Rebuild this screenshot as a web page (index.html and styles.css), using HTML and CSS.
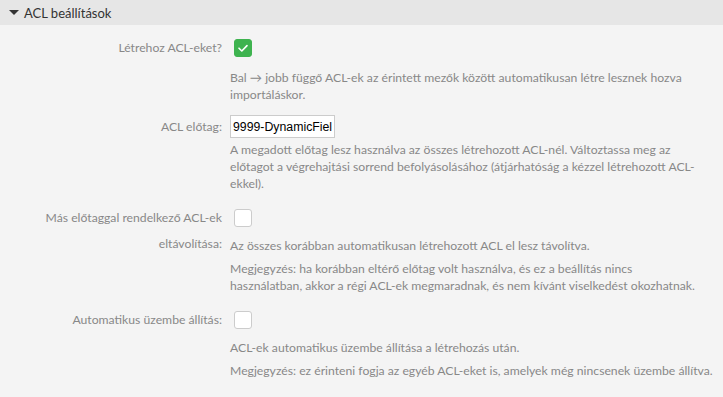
FILE: index.html
```html
<html lang="en">
<head>
  <meta charset="UTF-8" />
  <title>ACL beállítások</title>
  <link rel="stylesheet" href="styles.css">
</head>
<body>
  <div class="widget">
    <div class="widget-header">
      <span class="toggle"></span>
      <h2>ACL beállítások</h2>
    </div>

    <div class="widget-content">
      <div class="field-row first">
        <label class="field-label">Létrehoz ACL-eket?</label>
        <div class="field">
          <span class="checkbox checked">
            <svg viewBox="0 0 18 18" width="18" height="18"><path d="M5 9.2 L7.8 12 L13 6.6" fill="none" stroke="#fff" stroke-width="1.6" stroke-linecap="round" stroke-linejoin="round"/></svg>
          </span>
          <p class="desc">Bal → jobb függő ACL-ek az érintett mezők között automatikusan létre lesznek hozva importáláskor.</p>
        </div>
      </div>

      <div class="field-row text-row">
        <label class="field-label">ACL előtag:</label>
        <div class="field">
          <input class="text-input" type="text" value="9999-DynamicField" />
          <p class="desc">A megadott előtag lesz használva az összes létrehozott ACL-nél. Változtassa meg az előtagot a végrehajtási sorrend befolyásolásához (átjárhatóság a kézzel létrehozott ACL-ekkel).</p>
        </div>
      </div>

      <div class="field-row">
        <label class="field-label wrap">Más előtaggal rendelkező ACL-ek eltávolítása:</label>
        <div class="field">
          <span class="checkbox"></span>
          <p class="desc">Az összes korábban automatikusan létrehozott ACL el lesz távolítva.</p>
          <p class="desc note">Megjegyzés: ha korábban eltérő előtag volt használva, és ez a beállítás nincs<br>használatban, akkor a régi ACL-ek megmaradnak, és nem kívánt viselkedést okozhatnak.</p>
        </div>
      </div>

      <div class="field-row">
        <label class="field-label">Automatikus üzembe állítás:</label>
        <div class="field">
          <span class="checkbox"></span>
          <p class="desc">ACL-ek automatikus üzembe állítása a létrehozás után.</p>
          <p class="desc note">Megjegyzés: ez érinteni fogja az egyéb ACL-eket is, amelyek még nincsenek üzembe állítva.</p>
        </div>
      </div>
    </div>
  </div>
</body>
</html>
```

FILE: styles.css
```css
* {
  box-sizing: border-box;
}

body {
  margin: 0;
  padding: 0;
  background-color: #f4f4f4;
  font-family: Lato, "Open Sans", sans-serif;
  font-size: 12.2px;
  color: #888;
  overflow: hidden;
}

.widget-header {
  display: flex;
  align-items: center;
  height: 25px;
  padding-left: 9px;
  background-color: #e6e6e6;
}

.toggle {
  width: 0;
  height: 0;
  border-left: 5px solid transparent;
  border-right: 5px solid transparent;
  border-top: 5px solid #333;
  margin-right: 5px;
}

.widget-header h2 {
  margin: 0;
  font-size: 13px;
  font-weight: normal;
  color: #333;
}

.widget-content {
  padding-top: 9px;
}

.field-row {
  display: grid;
  grid-template-columns: 222px 1fr;
  column-gap: 8px;
  margin-bottom: 12px;
}

.field-label {
  text-align: right;
  line-height: 18px;
  padding-top: 5px;
}

.text-row .field-label {
  padding-top: 3px;
}

.field-label.wrap {
  line-height: 26px;
  padding-top: 1px;
}

.field {
  padding-right: 6px;
}

.checkbox {
  display: block;
  width: 18px;
  height: 18px;
  margin: 5px 0 0 4px;
  border: 1px solid #ccc;
  border-radius: 3px;
  background: #fff;
}

.checkbox.checked {
  border-color: #3eb34f;
  background: #3eb34f;
}

.checkbox svg {
  display: block;
  margin: -1px;
}

.text-input {
  display: block;
  width: 105px;
  height: 23px;
  padding: 0 2px;
  border: 1px solid #ccc;
  background: #fff;
  font-family: "Liberation Sans", Arial, sans-serif;
  font-size: 12.3px;
  color: #000;
}

.desc {
  margin: 10px 0 0;
  line-height: 17px;
}

.first .desc {
  margin-top: 12px;
}

.text-input + .desc {
  margin-top: 3px;
}

.desc.note {
  margin-top: 6px;
}
```
